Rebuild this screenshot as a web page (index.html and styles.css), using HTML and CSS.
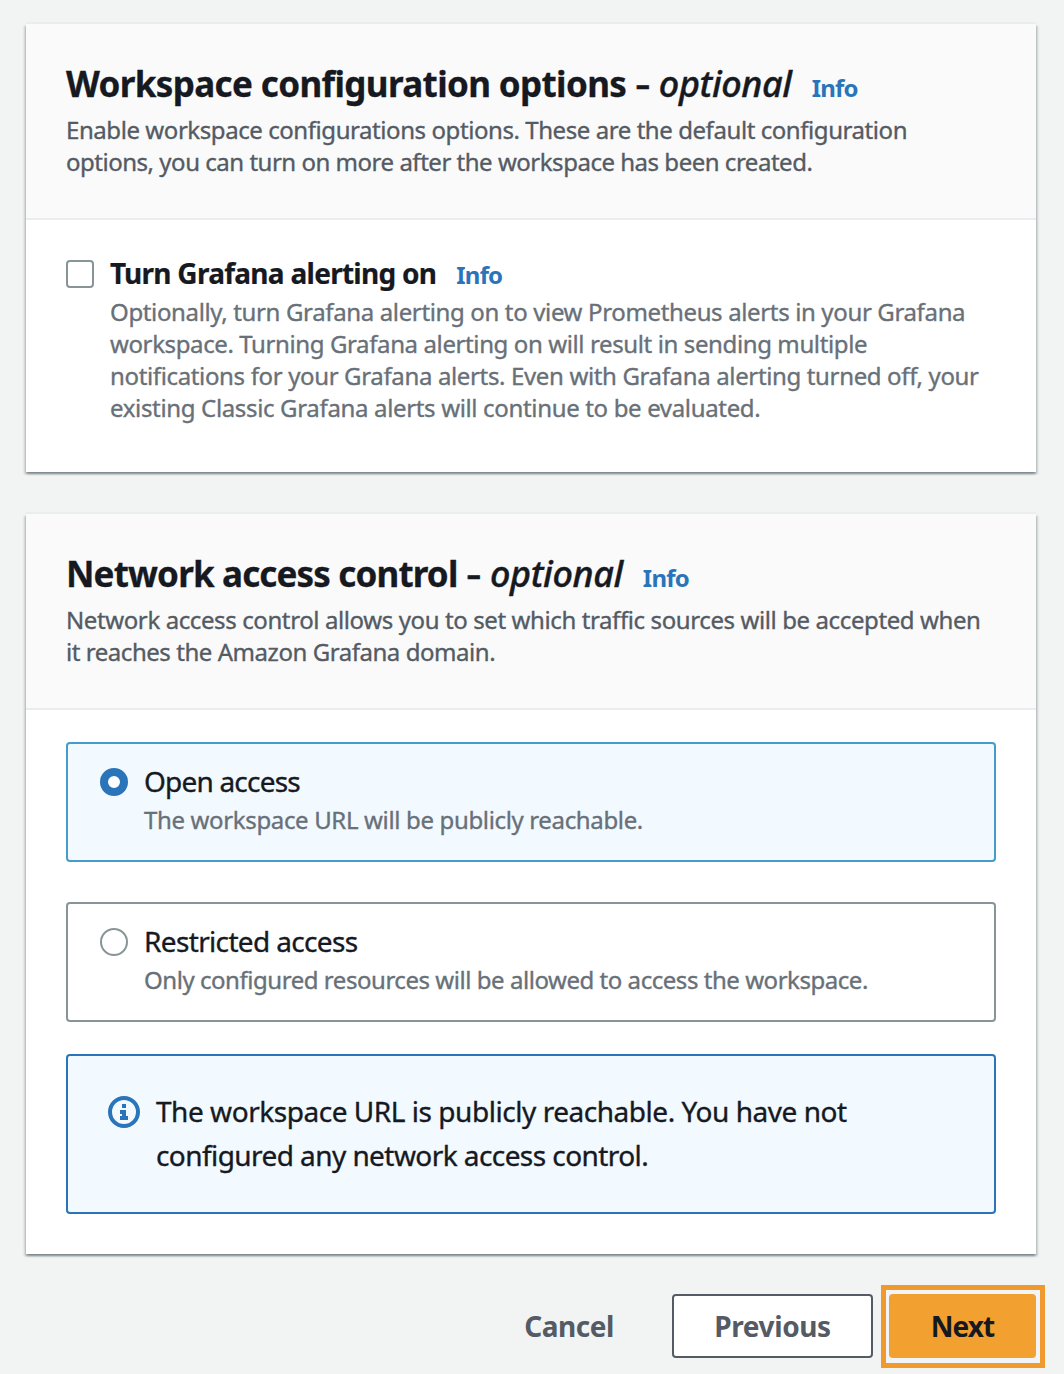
FILE: index.html
```html
<!DOCTYPE html>
<html lang="en">
<head>
<meta charset="utf-8">
<title>Create workspace</title>
<link rel="stylesheet" href="styles.css">
</head>
<body>
<main class="page">
  <section class="card">
    <header class="card-header">
      <h2 class="title"><span class="title-main t-workspace">Workspace configuration options</span> <span class="dash">-</span> <em class="optional">optional</em><a class="info" href="#">Info</a></h2>
      <p class="desc"><span class="line l1">Enable workspace configurations options. These are the default configuration</span> <span class="line l2">options, you can turn on more after the workspace has been created.</span></p>
    </header>
    <div class="card-body alerting">
      <span class="checkbox" role="checkbox" aria-checked="false"></span>
      <div class="option-text">
        <div class="check-label"><span class="label-text">Turn Grafana alerting on</span><a class="info" href="#">Info</a></div>
        <p class="hint"><span class="line l3">Optionally, turn Grafana alerting on to view Prometheus alerts in your Grafana</span> <span class="line l4">workspace. Turning Grafana alerting on will result in sending multiple</span> <span class="line l5">notifications for your Grafana alerts. Even with Grafana alerting turned off, your</span> <span class="line l6">existing Classic Grafana alerts will continue to be evaluated.</span></p>
      </div>
    </div>
  </section>

  <section class="card">
    <header class="card-header">
      <h2 class="title"><span class="title-main t-network">Network access control</span> <span class="dash">-</span> <em class="optional">optional</em><a class="info" href="#">Info</a></h2>
      <p class="desc"><span class="line l7">Network access control allows you to set which traffic sources will be accepted when</span> <span class="line l8">it reaches the Amazon Grafana domain.</span></p>
    </header>
    <div class="card-body network">
      <div class="tile selected">
        <span class="radio checked" role="radio" aria-checked="true"></span>
        <div class="option-text">
          <div class="tile-label"><span class="line l9">Open access</span></div>
          <p class="hint"><span class="line l10">The workspace URL will be publicly reachable.</span></p>
        </div>
      </div>
      <div class="tile">
        <span class="radio" role="radio" aria-checked="false"></span>
        <div class="option-text">
          <div class="tile-label"><span class="line l11">Restricted access</span></div>
          <p class="hint"><span class="line l12">Only configured resources will be allowed to access the workspace.</span></p>
        </div>
      </div>
      <div class="alert">
        <svg class="alert-icon" width="32" height="32" viewBox="0 0 32 32">
          <circle cx="16" cy="16" r="14" fill="none" stroke="currentColor" stroke-width="4"/>
          <path fill="currentColor" d="M14 8h4v4h-4zM12 14h6v6h2v4h-8v-4h2v-2h-2z"/>
        </svg>
        <p class="alert-text"><span class="line l13">The workspace URL is publicly reachable. You have not</span> <span class="line l14">configured any network access control.</span></p>
      </div>
    </div>
  </section>

  <footer class="actions">
    <button class="btn link"><span class="b1">Cancel</span></button>
    <button class="btn normal"><span class="b2">Previous</span></button>
    <div class="focus"><button class="btn primary"><span class="b3">Next</span></button></div>
  </footer>
</main>
</body>
</html>
```
FILE: styles.css
```css
* { box-sizing: border-box; }
body {
  margin: 0;
  background: #f2f4f3;
  color: #16191f;
  font-family: "Noto Sans", "Open Sans", sans-serif;
}
h2, p { margin: 0; }
a { color: #2a74b9; text-decoration: none; }
.page { height: 1374px; padding: 24px 28px 0 26px; overflow: hidden; }
.card {
  margin-bottom: 42px;
  background: #fff;
  box-shadow: 0 -2px 0 #eaeded, 0 2px 2px rgba(0,28,36,.3), 2px 2px 2px rgba(0,28,36,.15), -2px 2px 2px rgba(0,28,36,.15);
}
.card-header {
  height: 196px;
  padding: 35px 40px 0;
  background: #fafafa;
  border-bottom: 2px solid #eaeded;
}
.line { display: block; white-space: nowrap; -webkit-text-stroke: .35px currentColor; }
.title {
  display: flex;
  align-items: baseline;
  height: 55px;
  line-height: 50px;
  font-size: 36px;
  font-weight: 700;
  white-space: nowrap;
}
.title-main { font-size: 35px; -webkit-text-stroke: .3px currentColor; }
.t-workspace { letter-spacing: -.63px; }
.t-network { letter-spacing: -.85px; }
.dash { margin-left: 11px; transform: scaleX(1.3); -webkit-text-stroke: .6px currentColor; font-weight: 500; }
.optional { margin-left: 10px; font-weight: 500; letter-spacing: -.4px; -webkit-text-stroke: .4px currentColor; }
.info { margin-left: 20px; font-size: 24px; font-weight: 700; letter-spacing: -.8px; }
.desc, .hint { font-size: 24px; line-height: 32px; color: #545b64; }
.hint { color: #687078; }
.l1 { letter-spacing: -.43px; }
.l2 { letter-spacing: -.48px; }
.l3 { letter-spacing: -.355px; }
.l4 { letter-spacing: -.386px; }
.l5 { letter-spacing: -.354px; }
.l6 { letter-spacing: -.34px; }
.l7 { letter-spacing: -.393px; }
.l8 { letter-spacing: -.45px; }
.l9 { letter-spacing: -.8px; }
.l10 { letter-spacing: -.35px; }
.l11 { letter-spacing: -.65px; }
.l12 { letter-spacing: -.455px; }
.l13 { letter-spacing: -.46px; }
.l14 { letter-spacing: -.57px; }
.alerting { display: flex; gap: 16px; height: 252px; padding: 33px 40px 0; }
.checkbox {
  flex: none;
  width: 28px;
  height: 28px;
  margin-top: 7px;
  border: 2px solid #879596;
  border-radius: 4px;
  background: #fff;
}
.check-label { display: flex; align-items: baseline; height: 43px; line-height: 40px; font-size: 28px; font-weight: 700; white-space: nowrap; }
.label-text { letter-spacing: -.72px; -webkit-text-stroke: .2px currentColor; }
.network { height: 544px; padding: 32px 40px 0; }
.tile {
  display: flex;
  gap: 16px;
  height: 120px;
  margin-bottom: 40px;
  padding: 17px 32px 0;
  border: 2px solid #879596;
  border-radius: 4px;
}
.tile.selected { border-color: #439dc8; background: #f2f9ff; }
.radio { flex: none; width: 28px; height: 28px; margin-top: 7px; border: 2px solid #879596; border-radius: 50%; background: #fff; }
.radio.checked { border: 8px solid #2a74b9; }
.tile-label { height: 43px; line-height: 40px; font-size: 28px; }
.alert {
  display: flex;
  gap: 16px;
  height: 160px;
  margin-top: -8px;
  padding: 33px 40px 0;
  border: 2px solid #2a74b9;
  border-radius: 4px;
  background: #f2f9ff;
}
.alert-icon { flex: none; margin-top: 7px; color: #2a74b9; }
.alert-text { font-size: 28px; line-height: 44px; }
.actions { display: flex; justify-content: flex-end; margin: -11px -9px 0 0; }
.btn {
  height: 64px;
  margin: 9px 0 0;
  padding: 0;
  border: 2px solid transparent;
  border-radius: 4px;
  background: none;
  color: #545b64;
  font: 700 28px/40px "Noto Sans", "Open Sans", sans-serif;
}
.b1 { letter-spacing: -.5px; }
.b2 { letter-spacing: -.4px; }
.b3 { letter-spacing: -.9px; }
.link { width: 172px; margin-right: 17px; }
.normal { width: 201px; background: #fff; border-color: #545b64; }
.focus { width: 164px; height: 83px; margin-left: 8px; padding: 4px 3px; border: 5px solid #f0992c; background: #f2f4f8; }
.primary { width: 147px; margin: 0; background: #f2a02f; color: #16191f; }
```
